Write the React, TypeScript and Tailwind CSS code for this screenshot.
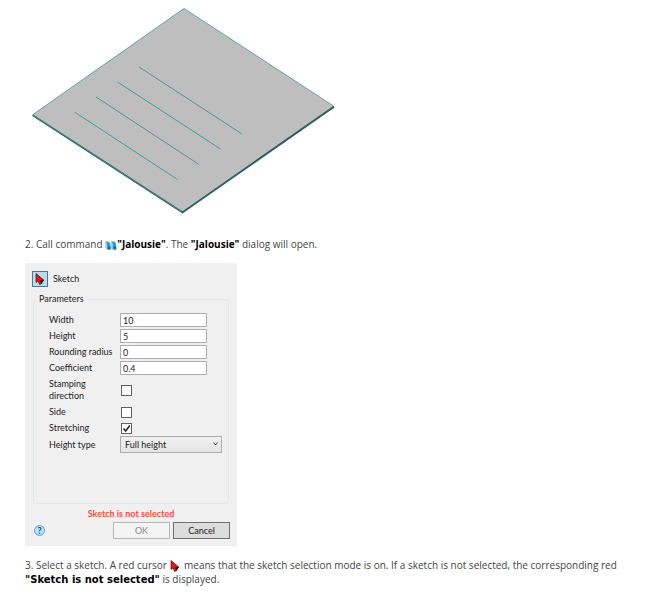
import { useState } from "react";

const FIELDS = [
  { id: "width", label: "Width", value: "10" },
  { id: "height", label: "Height", value: "5" },
  { id: "radius", label: "Rounding radius", value: "0" },
  { id: "coefficient", label: "Coefficient", value: "0.4" },
];

const CHECKS = [
  { id: "direction", label: "Stamping direction", checked: false, row: "h-7" },
  { id: "side", label: "Side", checked: false, row: "h-4" },
  { id: "stretching", label: "Stretching", checked: true, row: "h-4" },
];

function RedCursor({ className }: { className?: string }) {
  return (
    <svg className={className} width="10" height="12" viewBox="0 0 10 12" aria-hidden="true">
      <path d="M1 0.500v9l2-1.600 1.600 3.600 2.200-1-1.500-3 3.700-.2z" fill="#f01018" stroke="#4a1216" strokeWidth="0.700" />
      <path d="M5 7.200l4-.1-2.200 3.400-.6.200z" fill="#241416" />
    </svg>
  );
}

function JalousieIcon() {
  return (
    <svg className="inline-block align-[-2px]" width="12" height="10" viewBox="0 0 12 10" aria-hidden="true">
      <path d="M0.500 1.500h2c1.800.2 3 1.500 3 3.500v4.500h-3.500L0.500 8z" fill="#2e9cca" />
      <path d="M0.500 1.500l1.500 2v6L0.500 8z" fill="#a9dcf0" />
      <path d="M3 6.500h2.500v3H3z" fill="#1b6a96" />
      <path d="M6.200 1.500h2c1.800.2 3 1.500 3 3.500v4.500H7.700L6.200 8z" fill="#2e9cca" />
      <path d="M6.200 1.500l1.500 2v6L6.200 8z" fill="#a9dcf0" />
      <path d="M8.700 6.500h2.500v3H8.700z" fill="#1b6a96" />
    </svg>
  );
}

function Plate() {
  return (
    <svg className="block ml-[7px]" width="303" height="207" viewBox="32 7 303 207" role="img" aria-label="Sheet plate with four sketch lines">
      <path d="M33 114.500L183 211l150.500-105v2.300L182.500 213.500 33 116.500z" fill="#455355" />
      <path d="M184 8.500L333.500 106 182.500 211.500 33 114.500z" fill="#bebebe" />
      <path d="M33 114.500L184 8.500 333.500 106" fill="none" stroke="#65a09f" strokeWidth="1" />
      <path d="M33 115L182.500 212" fill="none" stroke="#3b8583" strokeWidth="1.200" />
      <path d="M182.500 212L333.500 106.500" fill="none" stroke="#286766" strokeWidth="1.200" />
      <path d="M33 114.500v2M182.500 211.500v2M333.500 106v2.500" stroke="#286766" strokeWidth="1" />
      <path d="M139 67l103 67M117.500 82l103 67M96 97l103 67.500M74.500 112l103 67.500" fill="none" stroke="#3f908f" strokeWidth="0.9" />
    </svg>
  );
}

function SketchDialog() {
  const [checks, setChecks] = useState<Record<string, boolean>>(
    Object.fromEntries(CHECKS.map((c) => [c.id, c.checked]))
  );

  return (
    <form
      className="w-[212px] bg-[#f0f0f0] px-[7px] pt-2 pb-[7px] font-['Lato','Open_Sans',sans-serif] text-[9px] leading-3 text-[#222]"
      onSubmit={(e) => e.preventDefault()}
    >
      <div className="flex items-center gap-[5px]">
        <button
          type="button"
          aria-label="Select sketch"
          className="flex h-4 w-4 items-center justify-center border border-[#4c7894] bg-[#b9dcee]"
        >
          <RedCursor />
        </button>
        <span>Sketch</span>
      </div>

      <fieldset className="mx-px mt-1.5 h-[211px] rounded-sm border border-[#dde7ea] pr-1.5 pl-[15px]">
        <legend className="-ml-3 px-0.5">Parameters</legend>
        <div className="pt-[7px]">
          {FIELDS.map((f) => (
            <div key={f.id} className="flex h-4 items-center">
              <label htmlFor={f.id} className="w-[71px] shrink-0 whitespace-nowrap">
                {f.label}
              </label>
              <input
                id={f.id}
                defaultValue={f.value}
                className="h-3.5 w-[87px] border border-[#abadb3] bg-white px-0.5 outline-none"
              />
            </div>
          ))}
          {CHECKS.map((c) => (
            <div key={c.id} className={`flex items-center ${c.row}`}>
              <label htmlFor={c.id} className="w-[72px] shrink-0 pr-4">
                {c.label}
              </label>
              <span className="relative flex">
                <input
                  id={c.id}
                  type="checkbox"
                  checked={checks[c.id]}
                  onChange={(e) => setChecks({ ...checks, [c.id]: e.target.checked })}
                  className="h-[11px] w-[11px] appearance-none border border-[#606060] bg-white"
                />
                {checks[c.id] && (
                  <svg className="pointer-events-none absolute inset-0" width="11" height="11" viewBox="0 0 11 11">
                    <path d="M2.500 5.500l2.200 2.500L8.800 2.500" fill="none" stroke="#222" strokeWidth="1.500" />
                  </svg>
                )}
              </span>
            </div>
          ))}
          <div className="flex h-[17px] items-center">
            <label htmlFor="type" className="w-[71px] shrink-0">
              Height type
            </label>
            <span className="relative flex">
              <select
                id="type"
                className="h-[17px] w-[102px] appearance-none border border-[#adadad] bg-linear-to-b from-[#f0f0f0] to-[#e5e5e5] px-1 outline-none"
              >
                <option>Full height</option>
              </select>
              <svg className="pointer-events-none absolute top-1.5 right-1" width="5" height="4" viewBox="0 0 5 4">
                <path d="M0.500 0.500l2 2.500 2-2.500" fill="none" stroke="#444" strokeWidth="1" />
              </svg>
            </span>
          </div>
        </div>
      </fieldset>

      <p className="mt-1 text-center font-bold text-[#fb4a45]">Sketch is not selected</p>

      <div className="mt-0.5 flex items-center gap-[3px]">
        <button
          type="button"
          aria-label="Help"
          className="mr-auto ml-0.5 flex h-[11px] w-[11px] items-center justify-center rounded-full border border-[#6fa3be] bg-[#b5e0f5] font-bold text-[#174e70]"
        >
          ?
        </button>
        <button type="submit" disabled className="h-[17px] w-[57px] border border-[#b4b9bc] bg-[#f4f4f4] text-[#8b8b8b]">
          OK
        </button>
        <button type="button" className="h-[17px] w-[57px] border border-[#707070] bg-[#dddddd]">
          Cancel
        </button>
      </div>
    </form>
  );
}

export default function App() {
  return (
    <main className="min-h-screen bg-white px-[25px] pt-[7px] pb-3 font-['Open_Sans',sans-serif] text-[10px] leading-[14px] text-[#444]">
      <Plate />

      <p className="mt-[23px]">
        2. Call command <JalousieIcon />
        <b className="text-black">"Jalousie"</b>. The <b className="text-black">"Jalousie"</b> dialog will open.
      </p>

      <div className="my-3">
        <SketchDialog />
      </div>

      <p>
        3. Select a sketch. A red cursor <RedCursor className="mx-px inline-block align-[-3px]" /> means that the sketch
        selection mode is on. If a sketch is not selected, the corresponding red{" "}
        <b className="font-['DejaVu_Sans',sans-serif] text-black">"Sketch is not selected"</b> is displayed.
      </p>
    </main>
  );
}
